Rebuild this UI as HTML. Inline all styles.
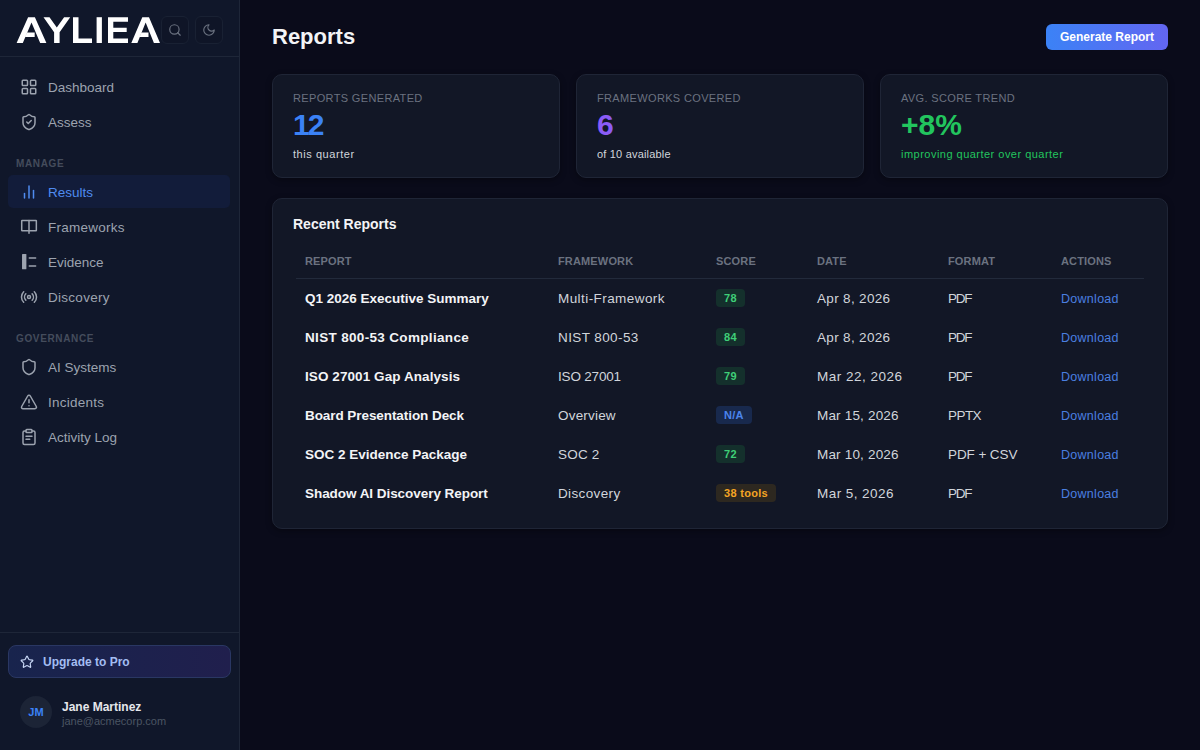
<!DOCTYPE html>
<html><head><meta charset="utf-8">
<style>
*{margin:0;padding:0;box-sizing:border-box}
html,body{width:1200px;height:750px;overflow:hidden}
body{background:#0a0b1a;font-family:"Liberation Sans",sans-serif;position:relative;color:#e5e7eb}
.a{position:absolute;white-space:nowrap}
.t{position:absolute;white-space:nowrap;line-height:20px;height:20px}
svg.i{position:absolute;fill:none;stroke:currentColor;stroke-width:2;stroke-linecap:round;stroke-linejoin:round}
#sb{position:absolute;left:0;top:0;width:240px;height:750px;background:#10172a;border-right:1px solid #1e2638}
#sbh{position:absolute;left:0;top:0;width:239px;height:57px;border-bottom:1px solid #1e2638}
.ib{position:absolute;top:16px;width:28px;height:28px;border:1px solid #192133;border-radius:6px;background:#0f1527;color:#6b7280}
.nav{color:#9ca3af;font-size:13.5px}
.nav .t{left:48px}
.sec{position:absolute;left:16px;font-size:10px;font-weight:bold;letter-spacing:.65px;color:#444c5c;line-height:20px;height:20px;white-space:nowrap}
#act{position:absolute;left:8px;top:175px;width:222px;height:33px;border-radius:5px;background:#121c3a}
#sbf{position:absolute;left:0;top:632px;width:239px;height:1px;background:#1e2638}
#upg{position:absolute;left:8px;top:645px;width:223px;height:33px;border-radius:8px;border:1px solid #2a3763;background:linear-gradient(90deg,#18244d,#201f4d)}
h1{position:absolute;left:272px;top:26px;font-size:22px;font-weight:bold;color:#f3f4f6;line-height:22px}
#gen{position:absolute;left:1046px;top:24px;width:122px;height:26px;border-radius:6px;background:linear-gradient(90deg,#3b82f6,#6366f1);color:#fff;font-size:12px;font-weight:bold;line-height:26px;text-align:center}
.card{position:absolute;top:74px;width:288px;height:104px;background:#121726;border:1px solid #1f2536;border-radius:10px;box-shadow:0 2px 6px rgba(0,0,0,.35)}
.lbl{position:absolute;left:20px;top:13px;font-size:11px;letter-spacing:.35px;color:#6b7280;line-height:20px;white-space:nowrap}
.big{position:absolute;left:20px;top:35px;font-size:30px;font-weight:bold;line-height:30px;white-space:nowrap}
.sub{position:absolute;left:20px;top:69px;font-size:11px;color:#d1d5db;line-height:20px;white-space:nowrap}
#tbl{position:absolute;left:272px;top:198px;width:896px;height:331px;background:#121726;border:1px solid #1f2536;border-radius:10px;box-shadow:0 2px 6px rgba(0,0,0,.35)}
.th{position:absolute;top:251px;font-size:11px;font-weight:bold;letter-spacing:.15px;color:#6b7280;line-height:20px;white-space:nowrap}
#hl{position:absolute;left:296px;top:278px;width:848px;height:1px;background:#222a3b}
.r{position:absolute;font-size:13.5px;line-height:20px;white-space:nowrap;color:#d1d5db}
.rn{font-weight:bold;color:#f3f4f6}
.dl{color:#4a7fe0;font-size:12.5px;letter-spacing:.28px}
.bd{position:absolute;height:18px;line-height:18px;font-size:11px;font-weight:bold;border-radius:4px;padding:0 8px;white-space:nowrap;letter-spacing:.3px}
.g{background:#14302c;color:#3fcf78}
.b{background:#18294d;color:#4b85ee}
.o{background:#2d2820;color:#f5a524}
</style></head><body>
<div id="sb">
  <div id="sbh"></div>
  <svg class="a" style="left:0;top:0" width="170" height="56" viewBox="0 0 170 56">
    <g fill="#ffffff">
      <path d="M16.6 43L28.1 17.2H34.9L46.4 43H40.2L31.5 22.6L22.8 43Z"/>
      <path d="M27 32.5H34.7V36.9H24.9Z"/>
      <path d="M43.5 17.2H49.5L56.8 27.6L64.1 17.2H70.2L59.6 32.2V43H54.1V32.2Z"/>
      <path d="M73 17.2H78.5V38.4H92V43H73Z"/>
      <path d="M96.6 17.2H101.9V43H96.6Z"/>
      <path d="M108 17.2H128V21.8H113.3V27.7H126.7V32.1H113.3V38.4H128V43H108Z"/>
      <path d="M131.3 43L142.3 17.2H149L160 43H153.9L145.65 22.6L137.4 43Z"/>
      <path d="M141.4 32.5H148.5V36.9H139.4Z"/>
    </g>
  </svg>
  <div class="ib" style="left:161px"><svg class="i" style="left:5.6px;top:6px" width="14" height="14" viewBox="0 0 24 24"><circle cx="11" cy="11" r="8"/><path d="m21 21-4.3-4.3"/></svg></div>
  <div class="ib" style="left:195px"><svg class="i" style="left:6px;top:6px" width="14" height="14" viewBox="0 0 24 24"><path d="M12 3a6 6 0 0 0 9 9 9 9 0 1 1-9-9Z"/></svg></div>

  <div id="act"></div>
  <div class="nav">
<svg class="i" style="left:20px;top:78px" width="18" height="18" viewBox="0 0 24 24"><rect width="7" height="7" x="3" y="3" rx="1"/><rect width="7" height="7" x="14" y="3" rx="1"/><rect width="7" height="7" x="14" y="14" rx="1"/><rect width="7" height="7" x="3" y="14" rx="1"/></svg>
<div class="t" style="top:77.5px;letter-spacing:0px">Dashboard</div>
<svg class="i" style="left:20px;top:113px" width="18" height="18" viewBox="0 0 24 24"><path d="M20 13c0 5-3.5 7.5-7.66 8.95a1 1 0 0 1-.67-.01C7.5 20.5 4 18 4 13V6a1 1 0 0 1 1-1c2 0 4.5-1.2 6.24-2.72a1.17 1.17 0 0 1 1.52 0C14.51 3.81 17 5 19 5a1 1 0 0 1 1 1z"/><path d="m9 12 2 2 4-4"/></svg>
<div class="t" style="top:112.5px;letter-spacing:0px">Assess</div>
<svg class="i" style="left:20px;top:183px;color:#4f8bf0" width="18" height="18" viewBox="0 0 24 24"><line x1="18" x2="18" y1="20" y2="10"/><line x1="12" x2="12" y1="20" y2="4"/><line x1="6" x2="6" y1="20" y2="14"/></svg>
<div class="t" style="top:182.5px;letter-spacing:0px;color:#4f8bf0">Results</div>
<svg class="i" style="left:20px;top:218px" width="18" height="18" viewBox="0 0 24 24"><rect x="2.3" y="3.3" width="19.5" height="13.8" rx="0.5"/><path d="M12 3.3v17"/></svg>
<div class="t" style="top:217.5px;letter-spacing:0.25px">Frameworks</div>
<svg class="i" style="left:20px;top:253px" width="18" height="18" viewBox="0 0 24 24"><rect x="2.7" y="1.3" width="5.8" height="20.5" rx="0.8" fill="currentColor" stroke="none"/><path d="M12.4 6.7h8.4"/><path d="M12.4 17.2h8.4"/></svg>
<div class="t" style="top:252.5px;letter-spacing:0px">Evidence</div>
<svg class="i" style="left:20px;top:288px" width="18" height="18" viewBox="0 0 24 24"><path d="M4.9 19.1C1 15.2 1 8.8 4.9 4.9"/><path d="M7.8 16.2c-2.3-2.3-2.3-6.1 0-8.5"/><circle cx="12" cy="12" r="2"/><path d="M16.2 7.8c2.3 2.3 2.3 6.1 0 8.5"/><path d="M19.1 4.9C23 8.8 23 15.1 19.1 19"/></svg>
<div class="t" style="top:287.5px;letter-spacing:0.28px">Discovery</div>
<svg class="i" style="left:20px;top:358px" width="18" height="18" viewBox="0 0 24 24"><path d="M20 13c0 5-3.5 7.5-7.66 8.95a1 1 0 0 1-.67-.01C7.5 20.5 4 18 4 13V6a1 1 0 0 1 1-1c2 0 4.5-1.2 6.24-2.72a1.17 1.17 0 0 1 1.52 0C14.51 3.81 17 5 19 5a1 1 0 0 1 1 1z"/></svg>
<div class="t" style="top:357.5px;letter-spacing:0px">AI Systems</div>
<svg class="i" style="left:20px;top:393px" width="18" height="18" viewBox="0 0 24 24"><path d="m21.73 18-8-14a2 2 0 0 0-3.48 0l-8 14A2 2 0 0 0 4 21h16a2 2 0 0 0 1.73-3"/><path d="M12 9v4"/><path d="M12 17h.01"/></svg>
<div class="t" style="top:392.5px;letter-spacing:0.25px">Incidents</div>
<svg class="i" style="left:20px;top:428px" width="18" height="18" viewBox="0 0 24 24"><rect width="8" height="4" x="8" y="2" rx="1" ry="1"/><path d="M16 4h2a2 2 0 0 1 2 2v14a2 2 0 0 1-2 2H6a2 2 0 0 1-2-2V6a2 2 0 0 1 2-2h2"/><path d="M8 11h8"/><path d="M8 15h5"/></svg>
<div class="t" style="top:427.5px;letter-spacing:0px">Activity Log</div>
  </div>
  <div class="sec" style="top:153.5px">MANAGE</div>
  <div class="sec" style="top:328.5px">GOVERNANCE</div>

  <div id="sbf"></div>
  <div id="upg"></div>
  <svg class="i" style="left:20.3px;top:654.7px;color:#c7d6f5" width="14" height="14" viewBox="0 0 24 24"><path d="M11.525 2.295a.53.53 0 0 1 .95 0l2.31 4.679a2.123 2.123 0 0 0 1.595 1.16l5.166.756a.53.53 0 0 1 .294.904l-3.736 3.638a2.123 2.123 0 0 0-.611 1.878l.882 5.14a.53.53 0 0 1-.771.56l-4.618-2.428a2.122 2.122 0 0 0-1.973 0L6.396 21.01a.53.53 0 0 1-.77-.56l.881-5.139a2.122 2.122 0 0 0-.611-1.879L2.160 9.795a.53.53 0 0 1 .294-.906l5.165-.755a2.122 2.122 0 0 0 1.597-1.160z"/></svg>
  <div class="t" style="left:43px;top:652px;font-size:12px;font-weight:bold;color:#a3bdf2">Upgrade to Pro</div>

  <div class="a" style="left:20px;top:696px;width:32px;height:32px;border-radius:50%;background:#1c2436;color:#3b82f6;font-size:11px;font-weight:bold;line-height:32px;text-align:center">JM</div>
  <div class="t" style="left:62px;top:697px;font-size:12px;font-weight:bold;color:#e5e7eb">Jane Martinez</div>
  <div class="t" style="left:62px;top:711px;font-size:11px;color:#4b5563">jane@acmecorp.com</div>
</div>

<h1>Reports</h1>
<div id="gen">Generate Report</div>

<div class="card" style="left:272px">
  <div class="lbl">REPORTS GENERATED</div>
  <div class="big" style="color:#3b82f6;letter-spacing:-2px">12</div>
  <div class="sub" style="letter-spacing:.55px">this quarter</div>
</div>
<div class="card" style="left:576px">
  <div class="lbl">FRAMEWORKS COVERED</div>
  <div class="big" style="color:#8b5cf6">6</div>
  <div class="sub" style="letter-spacing:.19px">of 10 available</div>
</div>
<div class="card" style="left:880px">
  <div class="lbl">AVG. SCORE TREND</div>
  <div class="big" style="color:#22c55e">+8%</div>
  <div class="sub" style="color:#22c55e;letter-spacing:.48px">improving quarter over quarter</div>
</div>

<div id="tbl"></div>
<div class="t" style="left:293px;top:214px;font-size:14px;font-weight:bold;color:#f3f4f6">Recent Reports</div>
<div class="th" style="left:305px">REPORT</div>
<div class="th" style="left:558px">FRAMEWORK</div>
<div class="th" style="left:716px">SCORE</div>
<div class="th" style="left:817px">DATE</div>
<div class="th" style="left:948px">FORMAT</div>
<div class="th" style="left:1061px">ACTIONS</div>
<div id="hl"></div>

<div class="r rn" style="left:305px;top:289px;letter-spacing:0px">Q1 2026 Executive Summary</div>
<div class="r" style="left:558px;top:289px;letter-spacing:0.43px">Multi-Framework</div>
<div class="bd g" style="left:716px;top:288.5px">78</div>
<div class="r" style="left:817px;top:289px;letter-spacing:0.33px">Apr 8, 2026</div>
<div class="r" style="left:948px;top:289px;letter-spacing:-1.2px">PDF</div>
<div class="r dl" style="left:1061px;top:289px">Download</div>
<div class="r rn" style="left:305px;top:328px;letter-spacing:0.33px">NIST 800-53 Compliance</div>
<div class="r" style="left:558px;top:328px;letter-spacing:0.4px">NIST 800-53</div>
<div class="bd g" style="left:716px;top:327.5px">84</div>
<div class="r" style="left:817px;top:328px;letter-spacing:0.33px">Apr 8, 2026</div>
<div class="r" style="left:948px;top:328px;letter-spacing:-1.2px">PDF</div>
<div class="r dl" style="left:1061px;top:328px">Download</div>
<div class="r rn" style="left:305px;top:367px;letter-spacing:0.08px">ISO 27001 Gap Analysis</div>
<div class="r" style="left:558px;top:367px;letter-spacing:-0.19px">ISO 27001</div>
<div class="bd g" style="left:716px;top:366.5px">79</div>
<div class="r" style="left:817px;top:367px;letter-spacing:0.5px">Mar 22, 2026</div>
<div class="r" style="left:948px;top:367px;letter-spacing:-1.2px">PDF</div>
<div class="r dl" style="left:1061px;top:367px">Download</div>
<div class="r rn" style="left:305px;top:406px;letter-spacing:-0.07px">Board Presentation Deck</div>
<div class="r" style="left:558px;top:406px;letter-spacing:0.19px">Overview</div>
<div class="bd b" style="left:716px;top:405.5px">N/A</div>
<div class="r" style="left:817px;top:406px;letter-spacing:0.18px">Mar 15, 2026</div>
<div class="r" style="left:948px;top:406px;letter-spacing:-0.55px">PPTX</div>
<div class="r dl" style="left:1061px;top:406px">Download</div>
<div class="r rn" style="left:305px;top:445px;letter-spacing:0px">SOC 2 Evidence Package</div>
<div class="r" style="left:558px;top:445px;letter-spacing:0.2px">SOC 2</div>
<div class="bd g" style="left:716px;top:444.5px">72</div>
<div class="r" style="left:817px;top:445px;letter-spacing:0.18px">Mar 10, 2026</div>
<div class="r" style="left:948px;top:445px;letter-spacing:-0.09px">PDF + CSV</div>
<div class="r dl" style="left:1061px;top:445px">Download</div>
<div class="r rn" style="left:305px;top:484px;letter-spacing:-0.05px">Shadow AI Discovery Report</div>
<div class="r" style="left:558px;top:484px;letter-spacing:0.37px">Discovery</div>
<div class="bd o" style="left:716px;top:483.5px">38 tools</div>
<div class="r" style="left:817px;top:484px;letter-spacing:0.44px">Mar 5, 2026</div>
<div class="r" style="left:948px;top:484px;letter-spacing:-1.2px">PDF</div>
<div class="r dl" style="left:1061px;top:484px">Download</div>
</body></html>
